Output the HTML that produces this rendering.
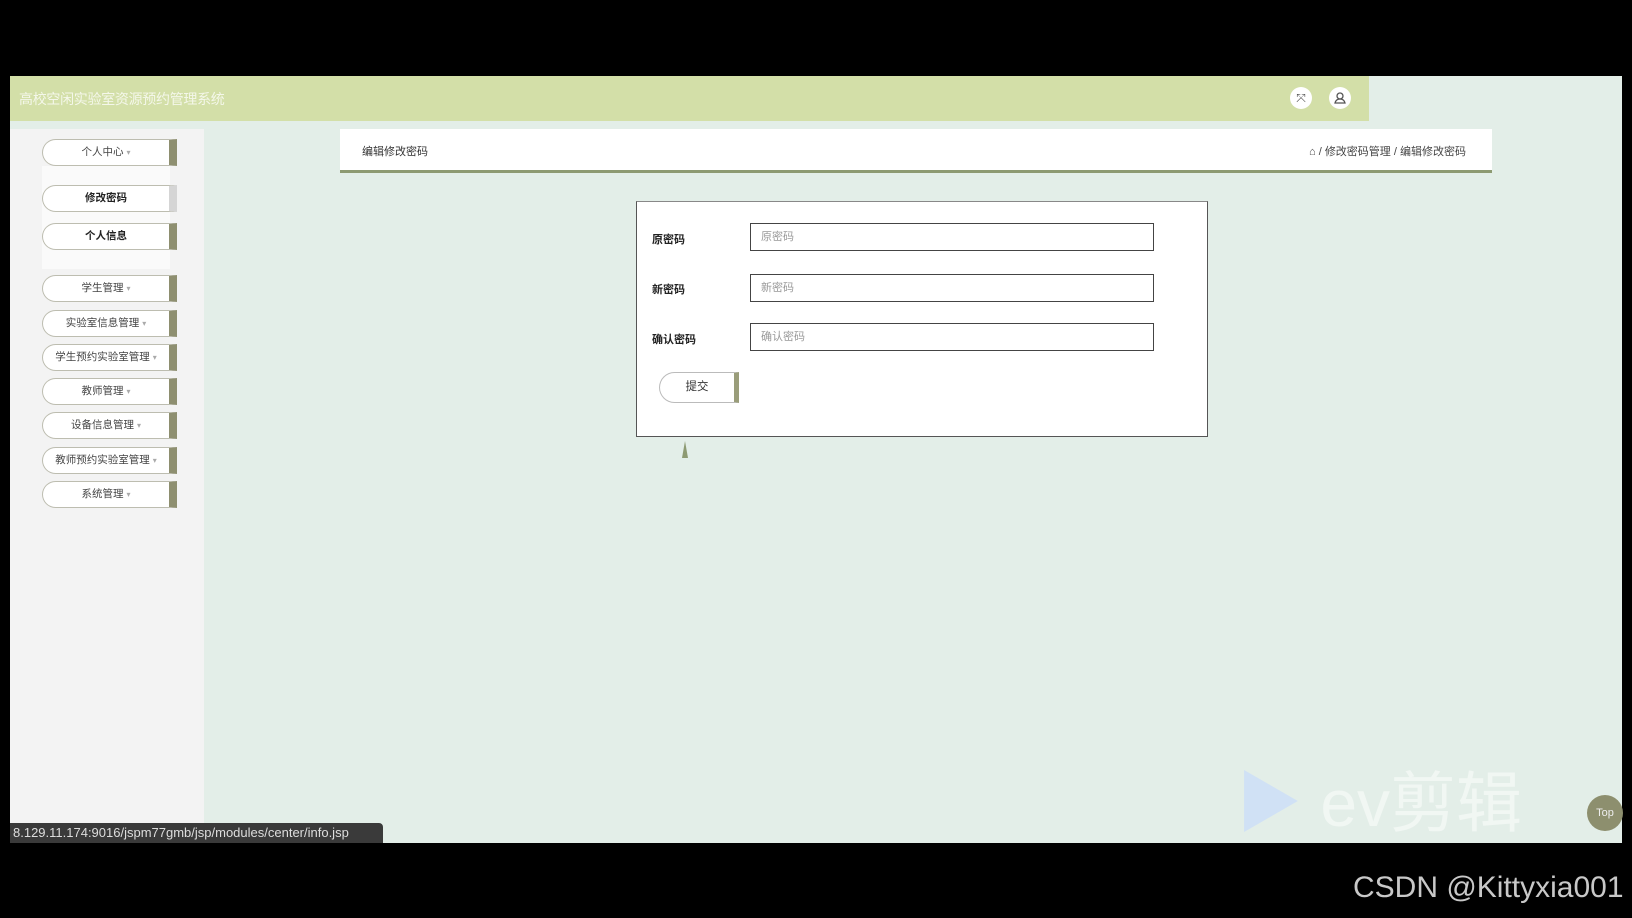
<!DOCTYPE html>
<html><head><meta charset="utf-8"><style>
*{margin:0;padding:0;box-sizing:border-box}
body{width:1632px;height:918px;background:#000;position:relative;overflow:hidden;font-family:"Liberation Sans","Noto Sans CJK SC",sans-serif}
.abs{position:absolute}
.btn{position:absolute;left:42px;width:135px;height:27px;background:#fff;border:1px solid #bdbdb0;border-right:8px solid #8e8f70;border-radius:14px 0 0 14px;font-size:10.5px;color:#444;text-align:center;line-height:25px}
.btn .c{font-size:8px;color:#aaa}
.lbl{position:absolute;left:652px;font-size:11px;font-weight:bold;color:#222}
.inp{position:absolute;left:750px;width:404px;height:28px;border:1.5px solid #444;background:#fff;font-size:11px;color:#999;padding-left:10px;line-height:26px}
</style></head><body>
<div class="abs" style="left:10px;top:76px;width:1612px;height:767px;background:#e3eee8"></div>
<div class="abs" style="left:10px;top:76px;width:1359px;height:45px;background:#d3dfa8"></div>
<div class="abs" style="left:19px;top:89px;font-size:14px;color:#f4f7ea;letter-spacing:-0.3px">高校空闲实验室资源预约管理系统</div>
<div class="abs" style="left:1290px;top:87px;width:22px;height:22px;border-radius:50%;background:#fff;font-size:12px;text-align:center;line-height:22px;color:#555">⤧</div>
<div class="abs" style="left:1329px;top:87px;width:22px;height:22px;border-radius:50%;background:#fff"><svg width="22" height="22"><circle cx="11" cy="9" r="3" fill="none" stroke="#555" stroke-width="1.3"/><path d="M6 16h10q-1-4-5-4t-5 4z" fill="none" stroke="#555" stroke-width="1.3"/></svg></div>
<div class="abs" style="left:10px;top:129px;width:194px;height:714px;background:#f3f3f3"></div>
<div class="abs" style="left:42px;top:166px;width:128px;height:103px;background:#fafafa"></div>
<div class="btn" style="top:139px">个人中心 <span class="c">▾</span></div>
<div class="btn" style="top:185px;font-weight:bold;color:#222;border-right-color:#d5d5d5">修改密码</div>
<div class="btn" style="top:223px;font-weight:bold;color:#222">个人信息</div>
<div class="btn" style="top:275px">学生管理 <span class="c">▾</span></div>
<div class="btn" style="top:310px">实验室信息管理 <span class="c">▾</span></div>
<div class="btn" style="top:344px">学生预约实验室管理 <span class="c">▾</span></div>
<div class="btn" style="top:378px">教师管理 <span class="c">▾</span></div>
<div class="btn" style="top:412px">设备信息管理 <span class="c">▾</span></div>
<div class="btn" style="top:447px">教师预约实验室管理 <span class="c">▾</span></div>
<div class="btn" style="top:481px">系统管理 <span class="c">▾</span></div>
<div class="abs" style="left:340px;top:129px;width:1152px;height:44px;background:#fff;border-bottom:3px solid #8d9a72"></div>
<div class="abs" style="left:362px;top:143px;font-size:11px;color:#333">编辑修改密码</div>
<div class="abs" style="left:1309px;top:143px;font-size:11px;color:#444">⌂ / 修改密码管理 / 编辑修改密码</div>
<div class="abs" style="left:636px;top:201px;width:572px;height:236px;background:#fff;border:1.5px solid #555;border-top-color:#888"></div>
<div class="lbl" style="top:231px">原密码</div>
<div class="lbl" style="top:281px">新密码</div>
<div class="lbl" style="top:331px">确认密码</div>
<div class="inp" style="top:223px">原密码</div>
<div class="inp" style="top:274px">新密码</div>
<div class="inp" style="top:323px">确认密码</div>
<div class="abs" style="left:659px;top:372px;width:80px;height:31px;border:1px solid #bbb;border-right:5px solid #9a9d7a;border-radius:16px 0 0 16px;font-size:11.5px;color:#333;text-align:center;line-height:29px;background:#fff">提交</div>
<div class="abs" style="left:682px;top:441px;width:0;height:0;border-left:3px solid transparent;border-right:3px solid transparent;border-bottom:17px solid #8d9a72"></div>
<div class="abs" style="left:1236px;top:770px;font-size:66px;color:#f3f8f5;line-height:66px;opacity:.9"><span style="color:#cfe0f7">▶</span> ev剪辑</div>
<div class="abs" style="left:1587px;top:795px;width:36px;height:36px;border-radius:50%;background:#8d8f6e;color:#eee;font-size:11px;text-align:center;line-height:36px">Top</div>
<div class="abs" style="left:10px;top:823px;width:373px;height:20px;background:#3a3a3a;border-radius:0 4px 0 0;color:#ddd;font-size:13px;line-height:20px;padding-left:3px">8.129.11.174:9016/jspm77gmb/jsp/modules/center/info.jsp</div>
<div class="abs" style="left:1353px;top:871px;font-size:30px;color:#c8c8c8">CSDN @Kittyxia001</div>
</body></html>
